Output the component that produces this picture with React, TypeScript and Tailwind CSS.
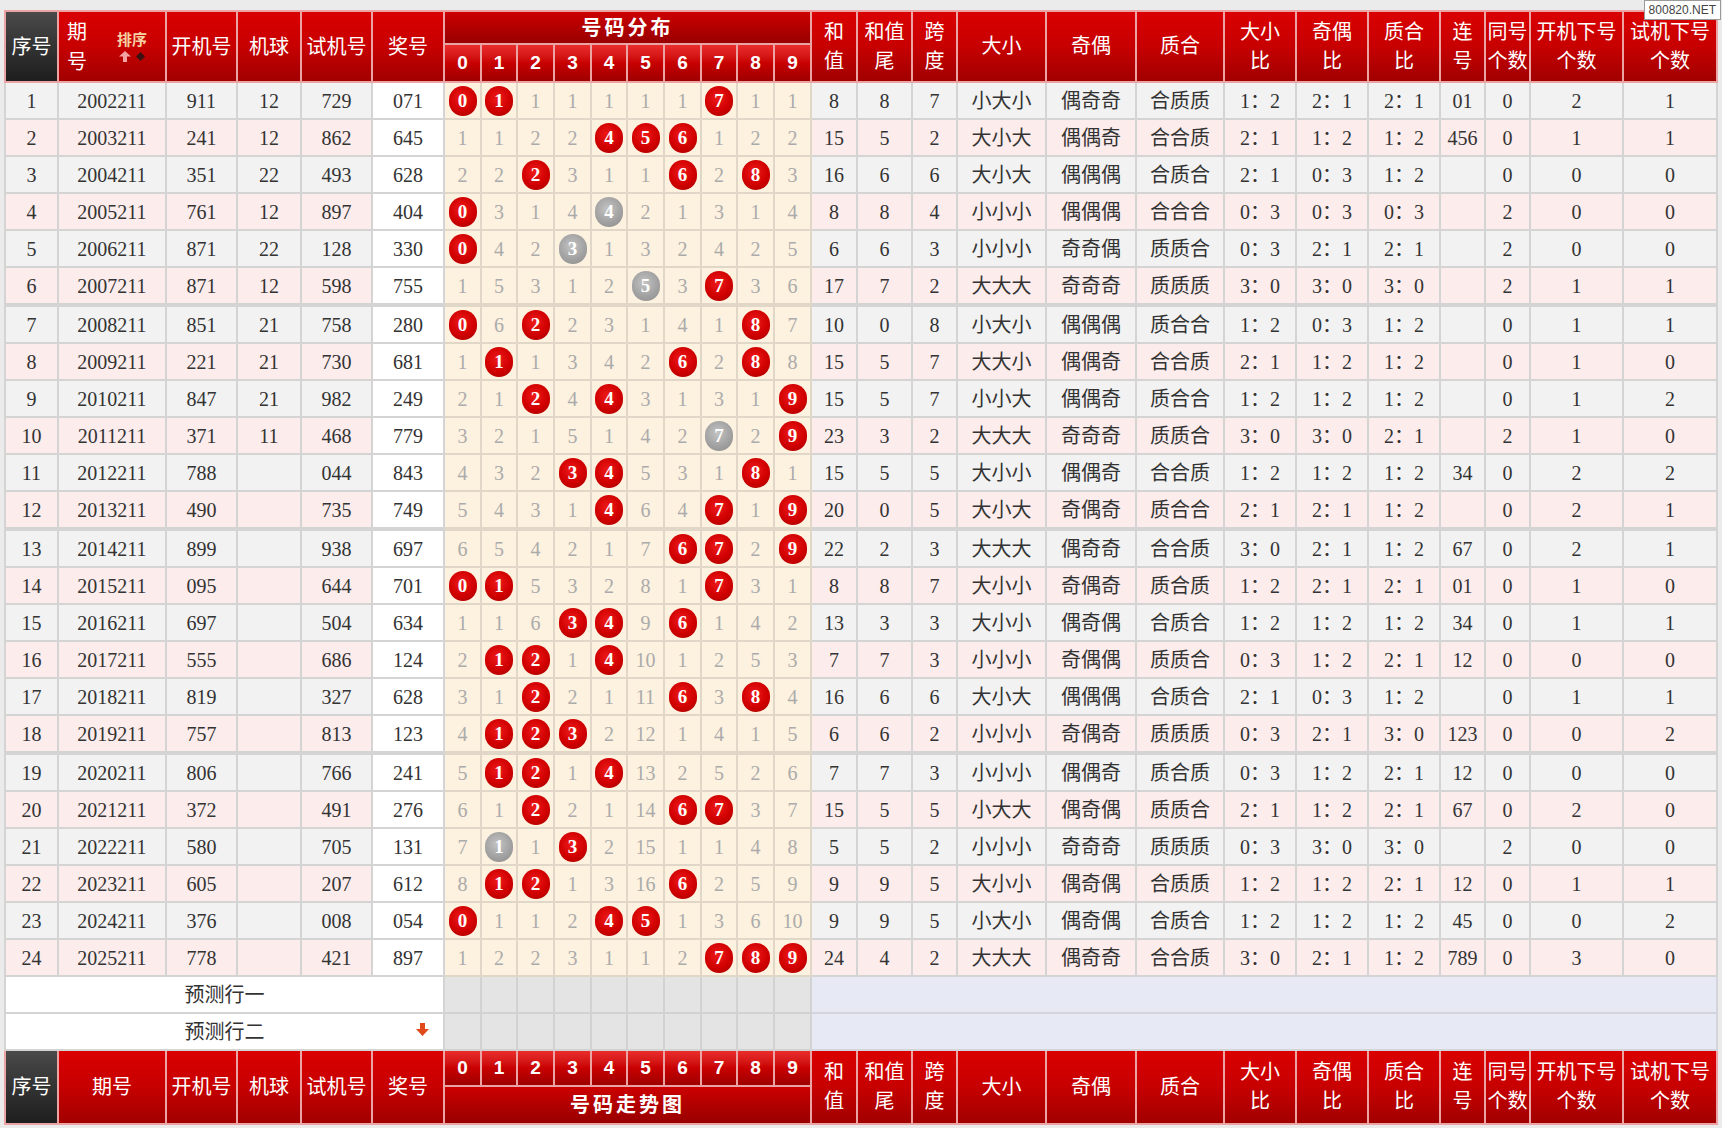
import React from 'react';

// one row: seq, period, kai, ball, shi, jiang, digit cells, stats
type Row = {
  q: number;
  p: string;
  kai: string;
  ball: string;
  shi: string;
  jiang: string;
  d: string;
  s: string[];
};

const raw: [string, string, string, string, string, string, string][] = [
  ['2002211', '911', '12', '729', '071', 'R R 1 1 1 1 1 R 1 1', '8|8|7|小大小|偶奇奇|合质质|1：2|2：1|2：1|01|0|2|1'],
  ['2003211', '241', '12', '862', '645', '1 1 2 2 R R R 1 2 2', '15|5|2|大小大|偶偶奇|合合质|2：1|1：2|1：2|456|0|1|1'],
  ['2004211', '351', '22', '493', '628', '2 2 R 3 1 1 R 2 R 3', '16|6|6|大小大|偶偶偶|合质合|2：1|0：3|1：2||0|0|0'],
  ['2005211', '761', '12', '897', '404', 'R 3 1 4 G 2 1 3 1 4', '8|8|4|小小小|偶偶偶|合合合|0：3|0：3|0：3||2|0|0'],
  ['2006211', '871', '22', '128', '330', 'R 4 2 G 1 3 2 4 2 5', '6|6|3|小小小|奇奇偶|质质合|0：3|2：1|2：1||2|0|0'],
  ['2007211', '871', '12', '598', '755', '1 5 3 1 2 G 3 R 3 6', '17|7|2|大大大|奇奇奇|质质质|3：0|3：0|3：0||2|1|1'],
  ['2008211', '851', '21', '758', '280', 'R 6 R 2 3 1 4 1 R 7', '10|0|8|小大小|偶偶偶|质合合|1：2|0：3|1：2||0|1|1'],
  ['2009211', '221', '21', '730', '681', '1 R 1 3 4 2 R 2 R 8', '15|5|7|大大小|偶偶奇|合合质|2：1|1：2|1：2||0|1|0'],
  ['2010211', '847', '21', '982', '249', '2 1 R 4 R 3 1 3 1 R', '15|5|7|小小大|偶偶奇|质合合|1：2|1：2|1：2||0|1|2'],
  ['2011211', '371', '11', '468', '779', '3 2 1 5 1 4 2 G 2 R', '23|3|2|大大大|奇奇奇|质质合|3：0|3：0|2：1||2|1|0'],
  ['2012211', '788', '', '044', '843', '4 3 2 R R 5 3 1 R 1', '15|5|5|大小小|偶偶奇|合合质|1：2|1：2|1：2|34|0|2|2'],
  ['2013211', '490', '', '735', '749', '5 4 3 1 R 6 4 R 1 R', '20|0|5|大小大|奇偶奇|质合合|2：1|2：1|1：2||0|2|1'],
  ['2014211', '899', '', '938', '697', '6 5 4 2 1 7 R R 2 R', '22|2|3|大大大|偶奇奇|合合质|3：0|2：1|1：2|67|0|2|1'],
  ['2015211', '095', '', '644', '701', 'R R 5 3 2 8 1 R 3 1', '8|8|7|大小小|奇偶奇|质合质|1：2|2：1|2：1|01|0|1|0'],
  ['2016211', '697', '', '504', '634', '1 1 6 R R 9 R 1 4 2', '13|3|3|大小小|偶奇偶|合质合|1：2|1：2|1：2|34|0|1|1'],
  ['2017211', '555', '', '686', '124', '2 R R 1 R 10 1 2 5 3', '7|7|3|小小小|奇偶偶|质质合|0：3|1：2|2：1|12|0|0|0'],
  ['2018211', '819', '', '327', '628', '3 1 R 2 1 11 R 3 R 4', '16|6|6|大小大|偶偶偶|合质合|2：1|0：3|1：2||0|1|1'],
  ['2019211', '757', '', '813', '123', '4 R R R 2 12 1 4 1 5', '6|6|2|小小小|奇偶奇|质质质|0：3|2：1|3：0|123|0|0|2'],
  ['2020211', '806', '', '766', '241', '5 R R 1 R 13 2 5 2 6', '7|7|3|小小小|偶偶奇|质合质|0：3|1：2|2：1|12|0|0|0'],
  ['2021211', '372', '', '491', '276', '6 1 R 2 1 14 R R 3 7', '15|5|5|小大大|偶奇偶|质质合|2：1|1：2|2：1|67|0|2|0'],
  ['2022211', '580', '', '705', '131', '7 G 1 R 2 15 1 1 4 8', '5|5|2|小小小|奇奇奇|质质质|0：3|3：0|3：0||2|0|0'],
  ['2023211', '605', '', '207', '612', '8 R R 1 3 16 R 2 5 9', '9|9|5|大小小|偶奇偶|合质质|1：2|1：2|2：1|12|0|1|1'],
  ['2024211', '376', '', '008', '054', 'R 1 1 2 R R 1 3 6 10', '9|9|5|小大小|偶奇偶|合质合|1：2|1：2|1：2|45|0|0|2'],
  ['2025211', '778', '', '421', '897', '1 2 2 3 1 1 2 R R R', '24|4|2|大大大|偶奇奇|合合质|3：0|2：1|1：2|789|0|3|0'],
];

const rows: Row[] = raw.map((r, i) => ({
  q: i + 1,
  p: r[0],
  kai: r[1],
  ball: r[2],
  shi: r[3],
  jiang: r[4],
  d: r[5],
  s: r[6].split('|'),
}));

const colWidths = [
  'w-[53px]', 'w-[108px]', 'w-[71px]', 'w-[64px]', 'w-[71px]', 'w-[72px]',
  'w-[37px]', 'w-[36px]', 'w-[37px]', 'w-[37px]', 'w-[36px]', 'w-[37px]', 'w-[37px]', 'w-[36px]', 'w-[37px]', 'w-[37px]',
  'w-[46px]', 'w-[55px]', 'w-[45px]', 'w-[89px]', 'w-[90px]', 'w-[88px]', 'w-[72px]', 'w-[72px]', 'w-[72px]',
  'w-[45px]', 'w-[45px]', 'w-[93px]', 'w-[94px]',
];

const statHeads = ['和\n值', '和值\n尾', '跨\n度', '大小', '奇偶', '质合', '大小\n比', '奇偶\n比', '质合\n比', '连\n号', '同号\n个数', '开机下号\n个数', '试机下号\n个数'];
const digits = [0, 1, 2, 3, 4, 5, 6, 7, 8, 9];

const redTh = 'border-2 border-[#eba3a3] bg-linear-to-b from-[#da0000] via-[#c70000] to-[#a10000] text-white font-normal text-[20px] p-0 align-middle';
const darkTh = 'border-2 border-[#eba3a3] bg-linear-to-b from-[#4a4a4a] to-[#1e1e1e] text-white font-normal text-[20px] p-0 align-middle';
const digitTh = "border-2 border-[#eba3a3] bg-linear-to-b from-[#ea2c2c] via-[#c80000] to-[#9e0000] text-white font-bold text-[19px] p-0 font-['Liberation_Sans',sans-serif]";
const bandTh = "border-2 border-[#eba3a3] bg-linear-to-b from-[#cc0000] to-[#980000] text-white font-bold text-[20px] tracking-[3px] p-0";

const Ball = ({ n, gray }: { n: number; gray?: boolean }) => (
  <span
    className={`inline-flex h-[30px] w-[28px] items-center justify-center rounded-full text-[19px] font-bold leading-none text-white ${
      gray
        ? 'bg-[radial-gradient(circle_at_45%_40%,#c4c4c4_0%,#a2a2a2_55%,#8a8a8a_100%)]'
        : 'bg-[radial-gradient(circle_at_45%_40%,#ee1a1a_0%,#d00000_55%,#a30000_100%)]'
    }`}
  >
    {n}
  </span>
);

const StatHead = ({ label }: { label: string }) => (
  <div className="whitespace-pre-line leading-[29px]">{label}</div>
);

const SortMark = () => (
  <div className="flex flex-col items-center">
    <span className="text-[15px] font-bold leading-none text-[#f6d2a4] font-['Noto_Sans_CJK_SC',sans-serif]">排序</span>
    <div className="mt-[5px] flex items-center gap-[5px]">
      <svg width="12" height="11" viewBox="0 0 12 11">
        <path d="M6 0 L12 5.5 L8 5.5 L8 11 L4 11 L4 5.5 L0 5.5 Z" fill="#f2a3a3" />
      </svg>
      <svg width="9" height="9" viewBox="0 0 9 9">
        <path d="M4.5 0 L9 4.5 L4.5 9 L0 4.5 Z" fill="#3a1010" />
      </svg>
    </div>
  </div>
);

// thick gray band between groups of six draws
const Spacer = () => (
  <tr>
    <td colSpan={29} className="h-[2px] border-0 bg-[#c6c6c6] p-0" />
  </tr>
);

const App: React.FC = () => {
  return (
    <div className="relative min-h-screen w-[1722px] bg-[#ebebeb] pl-[4px] pt-[10px] font-['Liberation_Serif','Noto_Sans_CJK_SC',serif] text-[#333]">
      <div className="absolute right-[1px] top-0 border border-[#9a9a9a] bg-white px-[4px] py-[1px] text-[12px] leading-[16px] text-[#444] font-['Liberation_Sans',sans-serif]">
        800820.NET
      </div>

      <table className="w-[1712px] table-fixed border-collapse">
        <colgroup>
          {colWidths.map((w, i) => (
            <col key={i} className={w} />
          ))}
        </colgroup>

        <thead>
          <tr className="h-[33px]">
            <th rowSpan={2} className={darkTh}>序号</th>
            <th rowSpan={2} className={redTh}>
              <div className="flex items-center justify-between pl-[8px] pr-[18px]">
                <div className="whitespace-pre-line leading-[30px]">{'期\n号'}</div>
                <SortMark />
              </div>
            </th>
            <th rowSpan={2} className={redTh}>开机号</th>
            <th rowSpan={2} className={redTh}>机球</th>
            <th rowSpan={2} className={redTh}>试机号</th>
            <th rowSpan={2} className={redTh}>奖号</th>
            <th colSpan={10} className={bandTh}>号码分布</th>
            {statHeads.map((h) => (
              <th key={h} rowSpan={2} className={redTh}>
                <StatHead label={h} />
              </th>
            ))}
          </tr>
          <tr className="h-[38px]">
            {digits.map((d) => (
              <th key={d} className={digitTh}>{d}</th>
            ))}
          </tr>
        </thead>

        <tbody className="text-[20px]">
          {rows.map((r) => {
            const odd = r.q % 2 === 1;
            const cell = `border-2 border-[#d4d4d4] p-0 text-center ${odd ? 'bg-[#f2f2f2]' : 'bg-[#fcecec]'}`;
            const dcell = 'border-2 border-[#e1d7c8] bg-[#fdf1df] p-0 text-center text-[#ababab]';
            const cells = r.d.split(' ');
            return (
              <React.Fragment key={r.q}>
                {(r.q === 7 || r.q === 13 || r.q === 19) && <Spacer />}
                <tr className="h-[37px]">
                  <td className={cell}>{r.q}</td>
                  <td className={cell}>{r.p}</td>
                  <td className={cell}>{r.kai}</td>
                  <td className={cell}>{r.ball}</td>
                  <td className={cell}>{r.shi}</td>
                  <td className="border-2 border-[#d4d4d4] bg-white p-0 text-center">{r.jiang}</td>
                  {cells.map((c, i) => (
                    <td key={i} className={dcell}>
                      {c === 'R' ? <Ball n={i} /> : c === 'G' ? <Ball n={i} gray /> : c}
                    </td>
                  ))}
                  {r.s.map((v, i) => (
                    <td key={i} className={cell}>{v}</td>
                  ))}
                </tr>
              </React.Fragment>
            );
          })}

          <tr className="h-[37px]">
            <td colSpan={6} className="border-2 border-[#d4d4d4] bg-white p-0 text-center">预测行一</td>
            {digits.map((d) => (
              <td key={d} className="border-2 border-[#d2d2d2] bg-[#e4e4e4] p-0" />
            ))}
            <td colSpan={13} className="border-2 border-[#d4d4dc] bg-[#e7e9f5] p-0" />
          </tr>
          <tr className="h-[37px]">
            <td colSpan={6} className="border-2 border-[#d4d4d4] bg-white p-0 text-center">
              <div className="relative">
                预测行二
                <svg className="absolute right-[14px] top-[6px]" width="13" height="13" viewBox="0 0 13 13">
                  <path d="M4 0 L9 0 L9 6 L13 6 L6.5 13 L0 6 L4 6 Z" fill="#e24a1c" />
                </svg>
              </div>
            </td>
            {digits.map((d) => (
              <td key={d} className="border-2 border-[#d2d2d2] bg-[#e4e4e4] p-0" />
            ))}
            <td colSpan={13} className="border-2 border-[#d4d4dc] bg-[#e7e9f5] p-0" />
          </tr>
        </tbody>

        <tfoot>
          <tr className="h-[36px]">
            <th rowSpan={2} className={darkTh}>序号</th>
            <th rowSpan={2} className={redTh}>期号</th>
            <th rowSpan={2} className={redTh}>开机号</th>
            <th rowSpan={2} className={redTh}>机球</th>
            <th rowSpan={2} className={redTh}>试机号</th>
            <th rowSpan={2} className={redTh}>奖号</th>
            {digits.map((d) => (
              <th key={d} className={digitTh}>{d}</th>
            ))}
            {statHeads.map((h) => (
              <th key={h} rowSpan={2} className={redTh}>
                <StatHead label={h} />
              </th>
            ))}
          </tr>
          <tr className="h-[38px]">
            <th colSpan={10} className={bandTh}>号码走势图</th>
          </tr>
        </tfoot>
      </table>
    </div>
  );
};

export default App;
